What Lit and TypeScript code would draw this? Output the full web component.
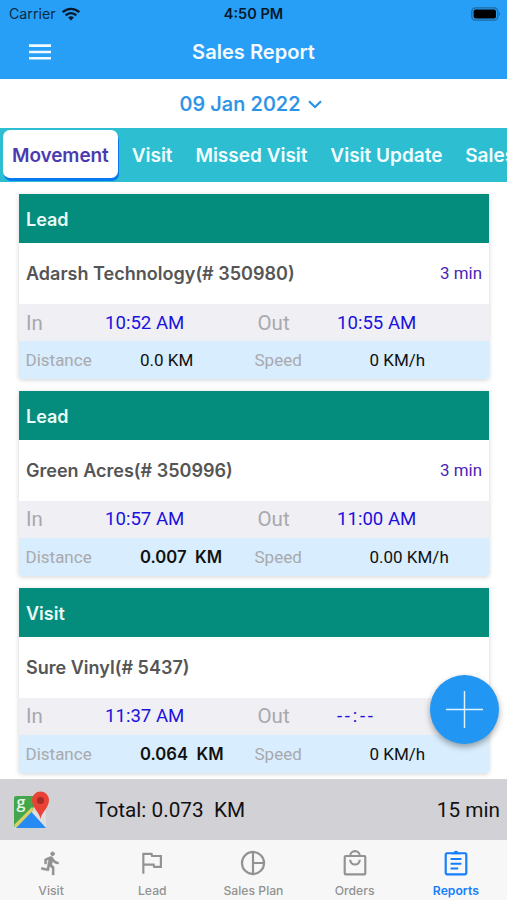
import { LitElement, html, css, svg } from "lit";
import { customElement, property } from "lit/decorators.js";
import { classMap } from "lit/directives/class-map.js";

interface Entry {
  kind: string;
  name: string;
  duration: string;
  timeIn: string;
  timeOut: string;
  distance: string;
  speed: string;
  moved: boolean;
}

const entries: Entry[] = [
  { kind: "Lead", name: "Adarsh Technology(# 350980)", duration: "3 min", timeIn: "10:52 AM", timeOut: "10:55 AM", distance: "0.0 KM", speed: "0 KM/h", moved: false },
  { kind: "Lead", name: "Green Acres(# 350996)", duration: "3 min", timeIn: "10:57 AM", timeOut: "11:00 AM", distance: "0.007  KM", speed: "0.00 KM/h", moved: true },
  { kind: "Visit", name: "Sure Vinyl(# 5437)", duration: "", timeIn: "11:37 AM", timeOut: "--:--", distance: "0.064  KM", speed: "0 KM/h", moved: true },
];

const tabIcons: Record<string, unknown> = {
  Visit: svg`<path fill="currentColor" stroke="currentColor" stroke-width=".3" d="M13.500 5.500c1.100 0 2-.9 2-2s-.9-2-2-2-2 .9-2 2 .9 2 2 2zM9.900 19.400l1-4.400 2.100 2v6h2v-7.500l-2.100-2 .6-3c1.300 1.500 3.300 2.500 5.500 2.500v-2c-1.900 0-3.500-1-4.300-2.400l-1-1.600c-.4-.6-1-1-1.700-1-.3 0-.5.1-.8.1L6 8.300V13h2V9.600l1.800-.7-1.600 8.100-4.900-1-.4 2 7 1.400z"/>`,
  Lead: svg`<path fill="none" stroke="currentColor" stroke-width="2" d="M4 22V3.500h7.600l.5 2H20.200v10h-6.200l-.5-2H4"/>`,
  "Sales Plan": svg`<g fill="none" stroke="currentColor" stroke-width="2"><circle cx="12" cy="12" r="10.200"/><path d="M12 2v20M12 12h10"/></g>`,
  Orders: svg`<g fill="none" stroke="currentColor" stroke-width="2"><rect x="2.500" y="5.500" width="19" height="17" rx="1"/><path d="M7.600 5.500a4.400 4.400 0 0 1 8.800 0M7.600 9a4.400 4.400 0 0 0 8.800 0"/></g>`,
  Reports: svg`<g fill="none" stroke="currentColor" stroke-width="2"><rect x="2.500" y="3" width="19" height="19.500" rx="1.200"/><path d="M7 8.300h10M7 12.700h10M7 17.100h7"/></g><path fill="currentColor" d="M8 2.500h1.600a2.500 2.500 0 0 1 4.800 0H16v1.500H8z"/>`,
};

@customElement("report-card")
export class ReportCard extends LitElement {
  @property({ attribute: false }) entry!: Entry;

  static styles = css`
    :host { display: block; flex: none; height: 185px; border-radius: 0 0 3px 3px; overflow: hidden; background: #fff; box-shadow: 0 1px 5px rgba(0, 0, 0, 0.18); font-family: Roboto, sans-serif; }
    span { white-space: pre; }
    .kind { height: 49px; padding-left: 7px; background: #048c7c; color: #e9faf7; font: 600 18px/51px Inter, sans-serif; box-sizing: border-box; }
    .name { display: flex; justify-content: space-between; height: 61px; padding: 0 7px; font: 600 18.050px/62px Inter, sans-serif; color: #555; }
    .dur { font: 400 16.900px/61px Roboto, sans-serif; color: #4a1fb8; }
    .times, .stats { display: grid; align-items: center; padding-left: 7px; }
    .times { grid-template-columns: 79px 152.500px 79.500px 1fr; height: 37px; background: #efeff4; font-size: 18.600px; color: #1d12dd; }
    .stats { grid-template-columns: 114px 115px 114.500px 1fr; height: 38px; background: #d8edfd; font-size: 17px; color: #111; }
    .label { color: #a9a9ad; }
    .times .label { font-size: 20.500px; }
    .stats .label { margin-left: -0.500px; }
    .unset { letter-spacing: 2.700px; }
    .moved { font: 600 16.650px/20px Inter, sans-serif; }
  `;

  render() {
    const e = this.entry;
    return html`
      <div class="kind">${e.kind}</div>
      <div class="name"><span>${e.name}</span><span class="dur">${e.duration}</span></div>
      <div class="times"><span class="label">In</span><span>${e.timeIn}</span><span class="label">Out</span><span class=${classMap({ unset: e.timeOut === "--:--" })}>${e.timeOut}</span></div>
      <div class="stats"><span class="label">Distance</span><span class=${classMap({ moved: e.moved })}>${e.distance}</span><span class="label">Speed</span><span>${e.speed}</span></div>
    `;
  }
}

@customElement("app-root")
export class AppRoot extends LitElement {
  static styles = css`
    :host { position: relative; display: flex; flex-direction: column; width: 507px; height: 900px; overflow: hidden; background: #fff; font-family: Inter, sans-serif; }
    span { white-space: pre; }
    svg { display: block; }
    .status { display: grid; grid-template-columns: 1fr auto 1fr; align-items: center; flex: none; height: 27px; padding: 0 6px; background: #289ff7; color: #0a2b46; font-size: 14.200px; }
    .carrier { display: flex; align-items: center; gap: 6px; padding-left: 3px; }
    .clock { font-weight: 600; font-size: 14.500px; color: #06182a; }
    .battery { justify-self: end; }
    .bar { display: grid; grid-template-columns: 51px 1fr 51px; align-items: center; flex: none; height: 52px; padding-bottom: 2px; box-sizing: border-box; background: #289ff7; color: #f4fbff; }
    .menu { margin-left: 29px; }
    .title { text-align: center; font-size: 20.100px; font-weight: 600; }
    .date { display: flex; justify-content: center; align-items: center; flex: none; gap: 8px; height: 49px; padding: 1px 5px 0 0; box-sizing: border-box; background: #fff; color: #2b93e6; font-size: 20px; font-weight: 500; -webkit-text-stroke: 0.2px #2b93e6; }
    .tabs { display: flex; flex: none; height: 54px; background: #2ebed1; color: #f1fdff; font-size: 19px; font-weight: 600; line-height: 55px; overflow: hidden; }
    .tab { flex: none; margin-right: 22.800px; }
    .tabs .active { height: 48px; margin: 2px 14px 0 3px; padding: 0 9px; line-height: 51px; letter-spacing: -0.100px; border-radius: 7px; background: #fff; color: #4c3bb0; box-shadow: 1px 3px 0 #0879ef; }
    .list { display: flex; flex-direction: column; flex: none; gap: 11.800px; height: 597px; padding: 12px 18px 0 19px; box-sizing: border-box; overflow: hidden; }
    .total { display: flex; align-items: center; flex: none; height: 61px; padding: 0 7px 0 13px; background: #d1d1d6; color: #111; font: 400 20.750px Roboto, sans-serif; }
    .sum { flex: 1; margin-left: 45px; }
    .nav { display: grid; grid-template-columns: repeat(5, 101.200px); flex: 1; padding-left: 0.500px; background: #f7f7f7; color: #929292; font-size: 12.200px; font-weight: 500; }
    .item { display: flex; flex-direction: column; align-items: center; gap: 7px; padding-top: 10px; }
    .on { color: #157efb; font-weight: 600; }
    .fab { position: absolute; left: 430px; top: 675px; width: 69px; height: 69px; border-radius: 50%; background: #2196f3; box-shadow: 0 3px 6px rgba(0, 0, 0, 0.35); }
  `;

  render() {
    return html`
      <div class="status">
        <span class="carrier"><span>Carrier</span><svg width="18" height="14" viewBox="0 0 18 14"><g fill="none" stroke="#06182a" stroke-width="2.400"><path d="M.8 5.200a11.700 11.700 0 0 1 16.400 0M3.700 8.300a7.500 7.500 0 0 1 10.600 0"/></g><path fill="#06182a" d="M9 13.500L6.100 10.600a4.100 4.100 0 0 1 5.800 0z"/></svg></span>
        <span class="clock">4:50 PM</span>
        <svg class="battery" width="30" height="14" viewBox="0 0 30 14"><rect x=".8" y=".8" width="26" height="12.400" rx="3.600" fill="none" stroke="#1e689f" stroke-width="1.300"/><rect x="2.600" y="2.500" width="22.400" height="9" rx="2" fill="#000"/><path d="M28.200 5v4a2.500 2.500 0 0 0 0-4z" fill="#1e689f"/></svg>
      </div>
      <div class="bar">
        <svg class="menu" width="22" height="16" viewBox="0 0 22 16"><path fill="#f1fbff" d="M0 .3h22v2.600H0zM0 6.700h22v2.600H0zM0 13h22v2.600H0z"/></svg>
        <span class="title">Sales Report</span>
      </div>
      <div class="date"><span>09 Jan 2022</span><svg width="14" height="9" viewBox="0 0 14 9"><path d="M1 1.200l6 5.800 6-5.800" fill="none" stroke="currentColor" stroke-width="2.200"/></svg></div>
      <div class="tabs">
        <span class="tab active">Movement</span><span class="tab">Visit</span><span class="tab">Missed Visit</span><span class="tab">Visit Update</span><span class="tab">Sales</span>
      </div>
      <div class="list">${entries.map((e) => html`<report-card .entry=${e}></report-card>`)}</div>
      <div class="total">
        <svg width="37" height="38" viewBox="0 0 37 38">
          <path d="M3 5h30v32H3a2 2 0 0 1-2-2V7a2 2 0 0 1 2-2z" fill="#dedfe3"/>
          <path d="M3 5h21L20 18 1 36V7a2 2 0 0 1 2-2z" fill="#43a64c"/>
          <path d="M1 34L19 16l2 3L4 37z" fill="#d9cf67"/>
          <path d="M3 37L18.500 21 33 37z" fill="#258bf2"/>
          <path d="M27.500 28c-1-7-8.500-11-8.500-19a8.500 8.500 0 0 1 17 0c0 8-7.500 12-8.500 19z" fill="#ea4335"/>
          <circle cx="27.500" cy="9.500" r="3.600" fill="#a52b28"/>
          <text x="3.500" y="16.500" fill="#e6f6e8" font-family="Open Sans, sans-serif" font-size="16" font-weight="600">g</text>
        </svg>
        <span class="sum">Total: 0.073  KM</span><span>15 min</span>
      </div>
      <div class="nav">
        ${Object.keys(tabIcons).map((name) => html`<div class=${classMap({ item: true, on: name === "Reports" })}><svg width="26" height="26" viewBox="0 0 24 24">${tabIcons[name]}</svg><span>${name}</span></div>`)}
      </div>
      <svg class="fab" viewBox="0 0 69 69"><path d="M34.500 16v37M16 34.500h37" stroke="#dff2ff" stroke-width="1.500"/></svg>
    `;
  }
}
